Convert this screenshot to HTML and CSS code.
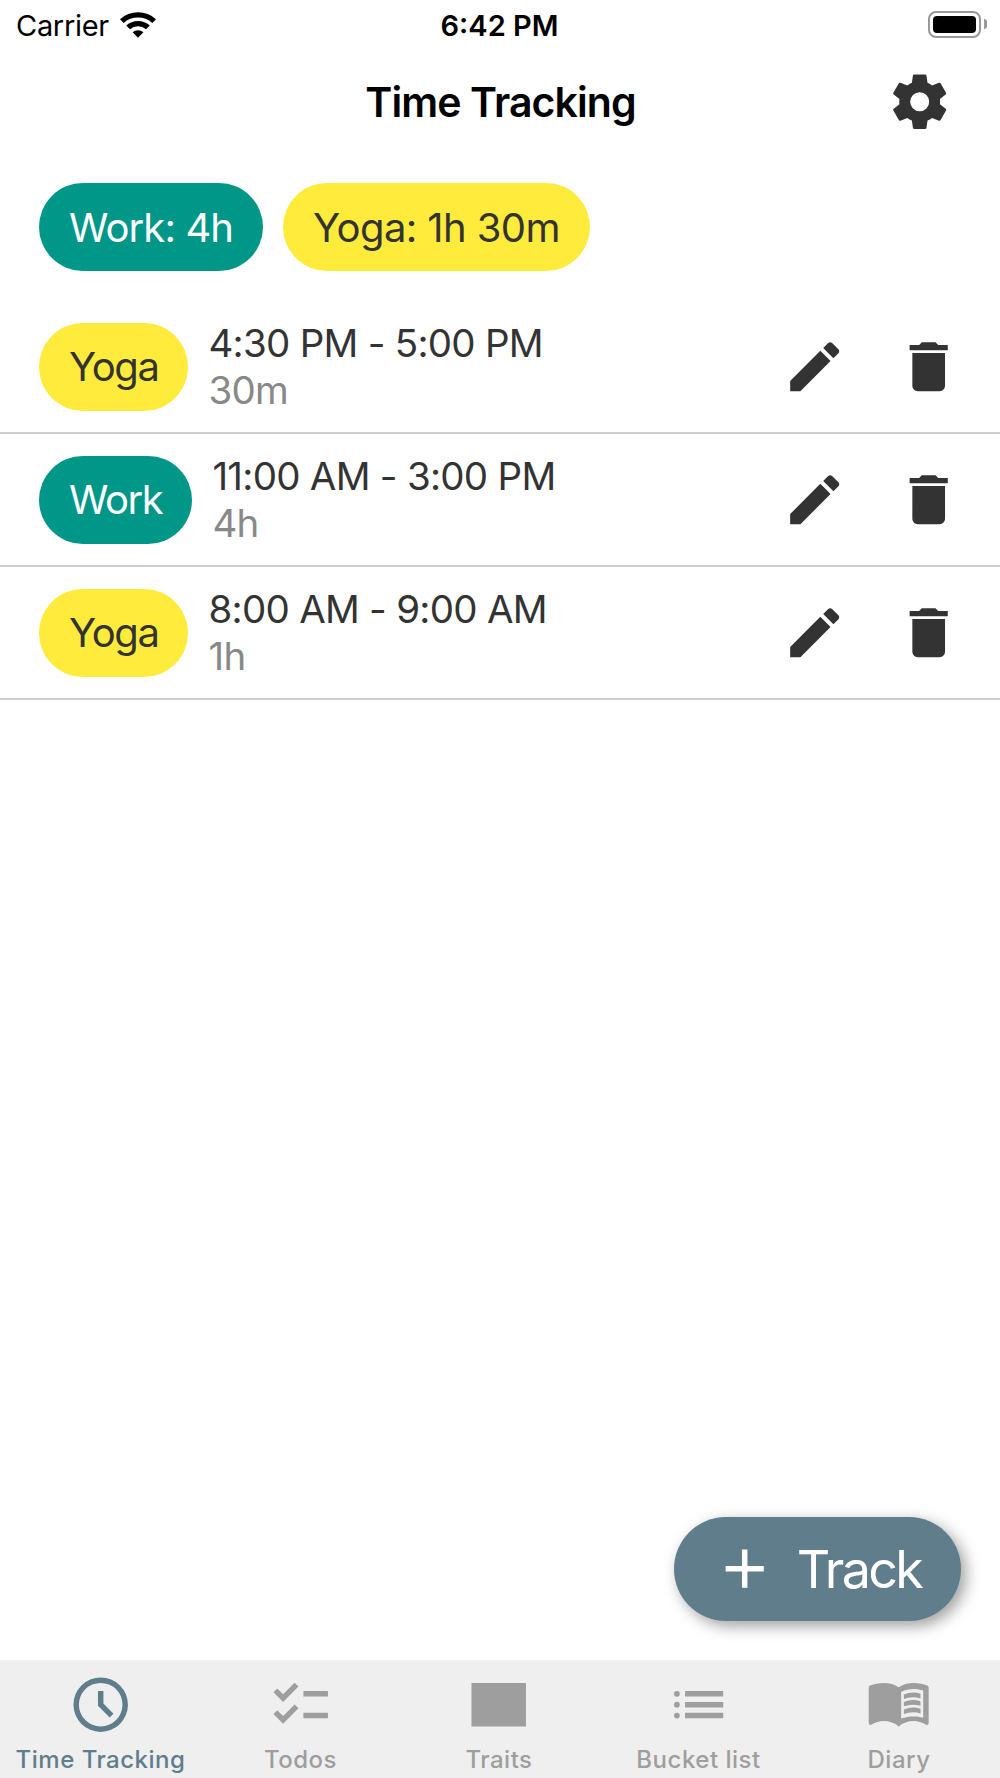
FILE: index.html
```
<!DOCTYPE html>
<html lang="en">
  <head>
    <meta charset="UTF-8" />
    <meta name="viewport" content="width=device-width, initial-scale=1.0" />
    <title>Time Tracking</title>

    <!-- CSS -->
    <link rel="stylesheet" href="styles.css">
  </head>
  <body>
    <!-- Shared icons -->
    <svg class="hide">
      <symbol id="icon-edit" viewBox="0 0 24 24">
        <path d="M3 17.25V21h3.75L17.81 9.94l-3.75-3.75L3 17.25zM20.71 7.04c.39-.39.39-1.02 0-1.41l-2.34-2.34c-.39-.39-1.02-.39-1.41 0l-1.83 1.83 3.75 3.75 1.83-1.83z" />
      </symbol>
      <symbol id="icon-delete" viewBox="0 0 24 24">
        <path d="M6 19c0 1.1.9 2 2 2h8c1.1 0 2-.9 2-2V7H6v12zM19 4h-3.500l-1-1h-5l-1 1H5v2h14V4z" />
      </symbol>
    </svg>

    <div class="app">
      <div class="status-bar">
        <div class="carrier">
          <span>Carrier</span>
          <svg class="wifi" viewBox="0 0 36 27">
            <path d="M0 8.300A26.500 26.500 0 0 1 36 8.300L32.300 12A21 21 0 0 0 3.700 12Z" />
            <path d="M6.200 14.500A17.500 17.500 0 0 1 29.800 14.500L26 18.300A12 12 0 0 0 10 18.300Z" />
            <path d="M12.600 21.300A8 8 0 0 1 23.400 21.300L18 26.800Z" />
          </svg>
        </div>
        <div class="clock">6:42 PM</div>
        <div class="battery">
          <div class="battery-case"><div class="battery-level"></div></div>
          <div class="battery-tip"></div>
        </div>
      </div>

      <div class="header">
        <h1 class="title">Time Tracking</h1>
        <svg class="icon settings" viewBox="0 0 24 24">
          <path d="M12 8.500a3.500 3.500 0 1 0 0 7 3.500 3.500 0 0 0 0-7zM19.430 12.980c.04-.32.07-.64.07-.98s-.03-.66-.07-.98l2.110-1.650c.19-.15.24-.42.12-.64l-2-3.460c-.12-.22-.39-.3-.61-.22l-2.490 1c-.52-.4-1.080-.73-1.690-.98l-.38-2.650C14.460 2.180 14.250 2 14 2h-4c-.25 0-.46.18-.49.42l-.38 2.650c-.61.25-1.170.59-1.690.98l-2.490-1c-.23-.09-.49 0-.61.22l-2 3.460c-.13.22-.07.49.12.64l2.110 1.650c-.04.32-.07.65-.07.98s.03.66.07.98l-2.110 1.650c-.19.15-.24.42-.12.64l2 3.460c.12.22.39.3.61.22l2.490-1c.52.4 1.080.73 1.690.98l.38 2.650c.03.24.24.42.49.42h4c.25 0 .46-.18.49-.42l.38-2.650c.61-.25 1.170-.59 1.690-.98l2.490 1c.23.09.49 0 .61-.22l2-3.460c.12-.22.07-.49-.12-.64l-2.110-1.650z" fill-rule="evenodd" />
        </svg>
      </div>

      <div class="summary">
        <div class="chip work">Work: 4h</div>
        <div class="chip yoga">Yoga: 1h 30m</div>
      </div>

      <div class="list">
        <div class="row">
          <div class="chip yoga">Yoga</div>
          <div class="info">
            <div class="time">4:30 PM - 5:00 PM</div>
            <div class="duration">30m</div>
          </div>
          <svg class="icon"><use href="#icon-edit" /></svg>
          <svg class="icon"><use href="#icon-delete" /></svg>
        </div>
        <div class="row">
          <div class="chip work">Work</div>
          <div class="info">
            <div class="time">11:00 AM - 3:00 PM</div>
            <div class="duration">4h</div>
          </div>
          <svg class="icon"><use href="#icon-edit" /></svg>
          <svg class="icon"><use href="#icon-delete" /></svg>
        </div>
        <div class="row">
          <div class="chip yoga">Yoga</div>
          <div class="info">
            <div class="time">8:00 AM - 9:00 AM</div>
            <div class="duration">1h</div>
          </div>
          <svg class="icon"><use href="#icon-edit" /></svg>
          <svg class="icon"><use href="#icon-delete" /></svg>
        </div>
      </div>

      <button class="track-btn">
        <svg class="icon" viewBox="0 0 24 24"><path d="M19 13h-6v6h-2v-6H5v-2h6V5h2v6h6v2z" /></svg>
        <span>Track</span>
      </button>

      <div class="tabs">
        <div class="tab active">
          <svg class="icon" viewBox="0 0 24 24">
            <path d="M12 2a10 10 0 1 0 0 20 10 10 0 0 0 0-20zm0 18a8 8 0 1 1 0-16 8 8 0 0 1 0 16z" />
            <path d="M13 7h-2v5.410l4.290 4.290 1.410-1.410-3.700-3.700z" />
          </svg>
          <span>Time Tracking</span>
        </div>
        <div class="tab">
          <svg class="icon" viewBox="0 0 24 24">
            <path d="M22 7h-9v2h9V7zM22 15h-9v2h9v-2zM5.540 11L2 7.460l1.410-1.410 2.120 2.120 4.240-4.240 1.410 1.410L5.540 11zM5.540 19L2 15.460l1.410-1.410 2.120 2.120 4.240-4.240 1.410 1.410L5.540 19z" />
          </svg>
          <span>Todos</span>
        </div>
        <div class="tab">
          <svg class="icon" viewBox="0 0 24 24"><path d="M2 4h20v16H2z" /></svg>
          <span>Traits</span>
        </div>
        <div class="tab">
          <svg class="icon" viewBox="0 0 24 24">
            <path d="M7 7h14v2H7zM7 11h14v2H7zM7 15h14v2H7z" />
            <circle cx="4" cy="8" r="1.050" />
            <circle cx="4" cy="12" r="1.050" />
            <circle cx="4" cy="16" r="1.050" />
          </svg>
          <span>Bucket list</span>
        </div>
        <div class="tab">
          <svg class="icon" viewBox="0 0 24 24">
            <path fill-rule="evenodd" d="M12 5.600C10.600 4.500 8.500 4 6.500 4 4.700 4 2.900 4.300 1.500 5 1.200 5.200 1 5.400 1 5.800V18.700C1 19.300 1.600 19.600 2.100 19.300 3.400 18.500 5 18 6.500 18 8.500 18 10.600 18.700 12 20 13.400 18.700 15.500 18 17.500 18 19 18 20.600 18.500 21.900 19.300 22.400 19.600 23 19.300 23 18.700V5.800C23 5.400 22.800 5.200 22.500 5 21.100 4.300 19.300 4 17.500 4 15.500 4 13.400 4.500 12 5.600ZM12.900 7.300C14.300 6.500 15.900 6.200 17.500 6.200 18.700 6.200 19.900 6.400 21 6.800V16.800C19.900 16.500 18.700 16.300 17.500 16.300 15.900 16.300 14.300 16.500 12.900 17.100Z" />
            <path d="M13.900 8.300Q17 7 20 8V9.700Q17 8.800 13.900 9.900ZM13.900 11Q17 9.700 20 10.700V12.400Q17 11.500 13.900 12.600ZM13.900 13.800Q17 12.500 20 13.500V15.200Q17 14.300 13.900 15.400Z" />
          </svg>
          <span>Diary</span>
        </div>
      </div>
    </div>
  </body>
</html>
```
FILE: styles.css
```
* {
  box-sizing: border-box;
}

body {
  margin: 0;
  font-family: Inter, sans-serif;
  color: #333;
  background-color: #fff;
}

.hide {
  display: none;
}

.app {
  width: 1000px;
  height: 1778px;
  display: flex;
  flex-direction: column;
}

.icon {
  width: 65.4px;
  height: 65.4px;
  flex-shrink: 0;
  fill: currentColor;
}

.status-bar {
  height: 51px;
  padding: 0 13px 3px 16px;
  display: grid;
  grid-template-columns: 1fr auto 1fr;
  align-items: center;
  color: #000;
  font-size: 29px;
}

.carrier {
  display: flex;
  align-items: center;
  gap: 11px;
  letter-spacing: -0.3px;
}

.carrier span,
.clock {
  padding-top: 2px;
}

.wifi {
  width: 36px;
  height: 27px;
}

.clock {
  margin-right: 4px;
  font-weight: 600;
}

.battery {
  display: flex;
  justify-content: flex-end;
  align-items: center;
  gap: 3px;
}

.battery-case {
  width: 53px;
  height: 27px;
  padding: 3px;
  border: 2px solid #999;
  border-radius: 8px;
}

.battery-level {
  height: 17px;
  border-radius: 4px;
  background-color: #000;
}

.battery-tip {
  width: 3px;
  height: 10px;
  border-radius: 0 5px 5px 0;
  background-color: #999;
}

.header {
  height: 101px;
  padding-right: 48px;
  display: grid;
  grid-template-columns: 1fr auto 1fr;
  align-items: center;
}

.title {
  grid-column: 2;
  margin: 0 0 0 49px;
  color: #000;
  font-size: 41px;
  font-weight: 600;
  letter-spacing: -0.9px;
}

.settings {
  justify-self: end;
}

.summary {
  height: 149px;
  padding: 31px 39px 30px;
  display: flex;
  gap: 20px;
}

.chip {
  height: 88px;
  padding: 0 30px;
  border-radius: 44px;
  display: flex;
  align-items: center;
  font-size: 40px;
  letter-spacing: -0.6px;
  white-space: nowrap;
}

.summary .work {
  letter-spacing: -0.9px;
}

.work {
  background-color: #009688;
  color: #fff;
}

.yoga {
  background-color: #ffeb3b;
}

.row {
  height: 133px;
  padding: 0 39px;
  border-bottom: 2px solid #cecece;
  display: flex;
  align-items: center;
  gap: 48px;
}

.row .chip {
  letter-spacing: -1.4px;
}

.info {
  flex: 1;
  margin-left: -28px;
  font-size: 38.5px;
  line-height: 47px;
  letter-spacing: -0.73px;
}

.duration {
  color: #888;
}

.track-btn {
  height: 104px;
  margin: auto 39px 39px auto;
  padding: 0 40px 0 38px;
  border: none;
  border-radius: 52px;
  display: flex;
  align-items: center;
  gap: 19px;
  background-color: #607d8b;
  color: #fff;
  font-family: inherit;
  font-size: 52px;
  letter-spacing: -2.7px;
  box-shadow: 5px 5px 15px rgba(0, 0, 0, 0.38);
}

.tabs {
  height: 118px;
  display: grid;
  grid-template-columns: 201px 199px 198px 201px 200px;
  background-color: #efefef;
  color: #9e9e9e;
}

.tab {
  padding-top: 12px;
  display: flex;
  flex-direction: column;
  align-items: center;
  gap: 9px;
  font-size: 24px;
  font-weight: 450;
  line-height: 28px;
  letter-spacing: 0.5px;
}

.active {
  color: #607d8b;
}
```
